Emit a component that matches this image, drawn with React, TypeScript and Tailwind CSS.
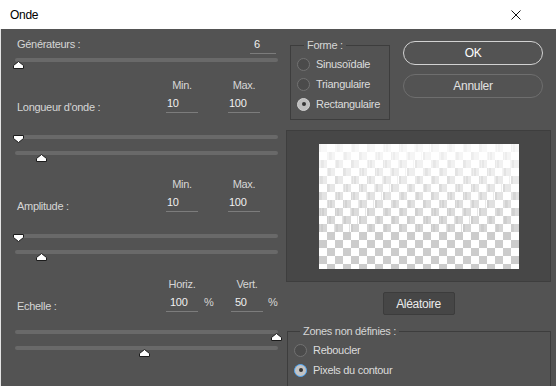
import React from "react";

// slider thumb, peaked up or down
const Thumb = ({ left, down }: { left: number; down?: boolean }) => (
  <svg
    width="11"
    height="8"
    viewBox="0 0 11 8"
    className={down ? "absolute top-0" : "absolute top-[3px]"}
    style={{ left }}
  >
    <path
      d={down ? "M0.5 0.5H10.5V3.5L5.5 7.5L0.5 3.5Z" : "M5.5 0.5L10.5 4.5V7.5H0.5V4.5Z"}
      fill="#ffffff"
      stroke="#1c1c1c"
      strokeWidth="1"
      strokeLinejoin="round"
    />
  </svg>
);

const Slider = ({ pos, down, className = "" }: { pos: number; down?: boolean; className?: string }) => (
  <div className={"relative h-[12px] w-[263px] " + className}>
    <div className="mt-[4px] h-[4px] rounded-full bg-[#696969]" />
    <Thumb left={pos} down={down} />
  </div>
);

const Field = ({ value, pad = "pl-[1px]" }: { value: string; pad?: string }) => (
  <div className={"h-[19px] w-[32px] border-b border-[#7c7c7c] pt-[3px] leading-[13px] text-[#f0f0f0] " + pad}>
    {value}
  </div>
);

const Radio = ({ label, checked, focus }: { label: string; checked?: boolean; focus?: boolean }) => (
  <div className="flex h-[20px] items-center gap-[6px]">
    <div
      className={
        "flex h-[13px] w-[13px] items-center justify-center rounded-full border " +
        (checked
          ? focus
            ? "border-[#4ea6f5] bg-[#c3c3c3]"
            : "border-[#d0d0d0] bg-[#bdbdbd]"
          : "border-[#727272] bg-[#4b4b4b]")
      }
    >
      {checked && <div className="h-[4px] w-[4px] rounded-full bg-[#333333]" />}
    </div>
    <span className="leading-[13px] text-[#dcdcdc]">{label}</span>
  </div>
);

// aperçu : damier estompé vers le haut
const Preview = () => {
  const cells: React.ReactNode[] = [];
  for (let r = 0; r < 16; r++) {
    const op = Math.min(1, 0.16 + r * 0.085);
    for (let c = 0; c < 25; c++) {
      if ((r + c) % 2 !== 0) continue;
      if (r >= 11) {
        cells.push(<rect key={r + "-" + c} x={c * 8} y={r * 8} width="8" height="8" fill="#cccccc" />);
      } else {
        const seed = (r * 31 + c * 17) % 7;
        cells.push(
          <g key={r + "-" + c} fill="#c4c4c4">
            <rect x={c * 8} y={r * 8} width="8" height="8" opacity={op * 0.7} />
            <rect x={c * 8 + (seed % 4)} y={r * 8} width="2" height="8" opacity={op * 0.6} />
            <rect x={c * 8 - 2 + seed} y={r * 8} width="1" height="8" opacity={op * 0.5} />
          </g>
        );
      }
    }
  }
  return (
    <svg width="200" height="125" viewBox="0 0 200 125" className="block bg-white">
      {cells}
    </svg>
  );
};

const App = () => {
  return (
    <div className="h-[386px] w-[556px] overflow-hidden bg-[#535353] font-['Liberation_Sans',Arial,sans-serif] text-[11px] tracking-[-0.3px] text-[#d6d6d6]">
      {/* barre de titre */}
      <div className="flex h-[29px] items-center justify-between bg-white pl-[10px] pr-[35px]">
        <span className="text-[12px] text-black">Onde</span>
        <svg width="10" height="10" viewBox="0 0 10 10">
          <path d="M0.5 0.5L9.5 9.5M9.5 0.5L0.5 9.5" stroke="#111" strokeWidth="1" />
        </svg>
      </div>

      <div className="flex h-[357px] border-l border-[#e4e4e4]">
        {/* colonne gauche */}
        <div className="w-[285px] shrink-0 pl-[14px]">
          <div className="mt-[7px] flex h-[18px] w-[263px] items-start">
            <span className="pl-[2px] pt-[2px] leading-[13px]">Générateurs :</span>
            <div className="ml-auto mr-[2px] h-[18px] w-[26px] border-b border-[#7c7c7c] pl-[4px] pt-[2px] leading-[13px] text-[#f0f0f0]">
              6
            </div>
          </div>
          <Slider pos={-2} className="mt-[4px]" />

          <div className="mt-[8px] flex h-[14px] leading-[14px]">
            <div className="w-[151px]" />
            <div className="w-[32px] text-center">Min.</div>
            <div className="ml-[30px] w-[32px] text-center">Max.</div>
          </div>
          <div className="mt-[2px] flex">
            <span className="w-[151px] pl-[2px] pt-[7px] leading-[13px]">Longueur d'onde :</span>
            <Field value="10" />
            <div className="ml-[30px]">
              <Field value="100" />
            </div>
          </div>
          <Slider pos={-2} down className="mt-[21px]" />
          <Slider pos={21} className="mt-[2px]" />

          <div className="mt-[14px] flex h-[14px] leading-[14px]">
            <div className="w-[151px]" />
            <div className="w-[32px] text-center">Min.</div>
            <div className="ml-[30px] w-[32px] text-center">Max.</div>
          </div>
          <div className="mt-[2px] flex">
            <span className="w-[151px] pl-[2px] pt-[7px] leading-[13px]">Amplitude :</span>
            <Field value="10" />
            <div className="ml-[30px]">
              <Field value="100" />
            </div>
          </div>
          <Slider pos={-2} down className="mt-[21px]" />
          <Slider pos={21} className="mt-[2px]" />

          <div className="mt-[15px] flex h-[14px] leading-[14px]">
            <div className="w-[151px]" />
            <div className="w-[32px] text-center">Horiz.</div>
            <div className="ml-[33px] w-[32px] text-center">Vert.</div>
          </div>
          <div className="mt-[2px] flex">
            <span className="w-[151px] pl-[2px] pt-[7px] leading-[13px]">Echelle :</span>
            <Field value="100" pad="pl-[4px]" />
            <span className="ml-[6px] w-[27px] pt-[3px] leading-[13px]">%</span>
            <Field value="50" pad="pl-[4px]" />
            <span className="ml-[5px] pt-[3px] leading-[13px]">%</span>
          </div>
          <Slider pos={256} className="mt-[17px]" />
          <Slider pos={124} />
        </div>

        {/* colonne droite */}
        <div className="flex-1">
          <div className="flex items-start">
            <div className="relative ml-[4px] mt-[16px] h-[75px] w-[100px] border border-[#3d3d3d] pl-[6px] pt-[8px]">
              <span className="absolute left-[13px] top-[-7px] bg-[#535353] px-[3px] leading-[13px]">Forme :</span>
              <Radio label="Sinusoïdale" />
              <Radio label="Triangulaire" />
              <Radio label="Rectangulaire" checked />
            </div>
            <div className="ml-[13px] mt-[12px] flex flex-col gap-[9px]">
              <button className="h-[24px] w-[140px] rounded-full border border-[#d2d2d2] text-[12px] text-white">
                OK
              </button>
              <button className="h-[24px] w-[140px] rounded-full border border-[#6e6e6e] text-[12px] text-[#e2e2e2]">
                Annuler
              </button>
            </div>
          </div>

          <div className="mt-[10px] flex h-[152px] w-[265px] items-center justify-center border border-[#3e3e3e] bg-[#474747]">
            <Preview />
          </div>

          <div className="flex w-[265px] justify-center">
            <button className="mt-[10px] h-[23px] w-[72px] rounded-[2px] border border-[#3c3c3c] bg-[#464646] text-[12px] text-[#ececec]">
              Aléatoire
            </button>
          </div>

          <div className="relative ml-[1px] mt-[16px] h-[70px] w-[264px] border border-[#3d3d3d] pl-[6px] pt-[8px]">
            <span className="absolute left-[12px] top-[-7px] bg-[#535353] px-[3px] leading-[13px]">Zones non définies :</span>
            <Radio label="Reboucler" />
            <Radio label="Pixels du contour" checked focus />
          </div>
        </div>
      </div>
    </div>
  );
};

export default App;
